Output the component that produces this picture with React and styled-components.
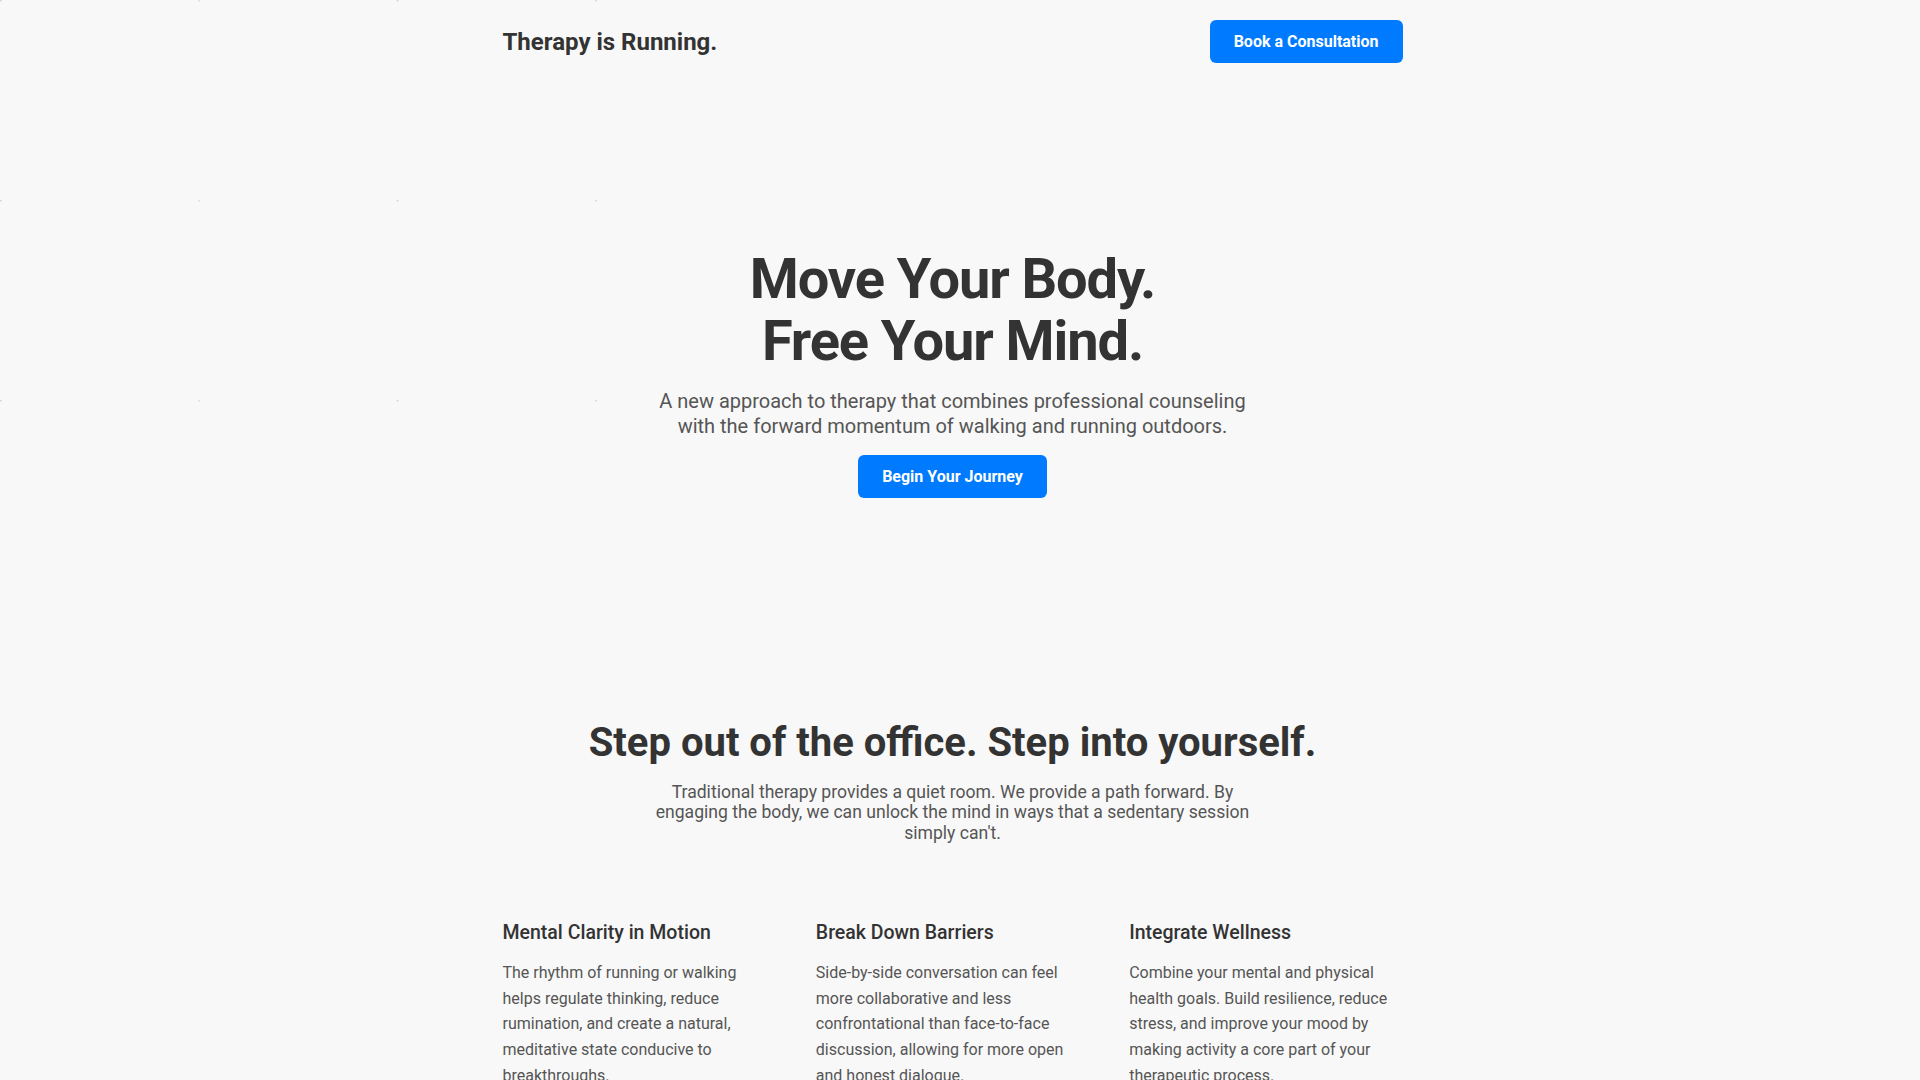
import React from 'react';
import styled, { createGlobalStyle } from 'styled-components';

const GlobalStyle = createGlobalStyle`
    * {
        box-sizing: border-box;
    }

    body {
        margin: 0;
        padding-right: 15px;
        background: #f8f8f8;
        color: #333333;
        font-family: Roboto, "Liberation Sans", Arial, sans-serif;
    }

    body::before {
        content: '';
        position: absolute;
        top: 0;
        left: 0;
        width: 600px;
        height: 402px;
        background-image: radial-gradient(circle at 0 0, #d6d6d6 1.4px, transparent 2px);
        background-size: 198.4px 200px;
        pointer-events: none;
        z-index: 0;
    }
`;

const features = [
    {
        title: 'Mental Clarity in Motion',
        text: 'The rhythm of running or walking helps regulate thinking, reduce rumination, and create a natural, meditative state conducive to breakthroughs.',
    },
    {
        title: 'Break Down Barriers',
        text: 'Side-by-side conversation can feel more collaborative and less confrontational than face-to-face discussion, allowing for more open and honest dialogue.',
    },
    {
        title: 'Integrate Wellness',
        text: 'Combine your mental and physical health goals. Build resilience, reduce stress, and improve your mood by making activity a core part of your therapeutic process.',
    },
];

export default function App() {
    return (
        <>
            <GlobalStyle />
            <Page>
                <Header>
                    <Logo>Therapy is Running.</Logo>
                    <Button>Book a Consultation</Button>
                </Header>

                <Hero>
                    <HeroTitle>
                        Move Your Body.
                        <br />
                        Free Your Mind.
                    </HeroTitle>
                    <HeroText>
                        A new approach to therapy that combines professional counseling
                        with the forward momentum of walking and running outdoors.
                    </HeroText>
                    <Button>Begin Your Journey</Button>
                </Hero>

                <Intro>
                    <SectionTitle>Step out of the office. Step into yourself.</SectionTitle>
                    <SectionText>
                        Traditional therapy provides a quiet room. We provide a path forward.
                        By engaging the body, we can unlock the mind in ways that a sedentary
                        session simply can't.
                    </SectionText>
                </Intro>

                <Features>
                    {
                        features.map((f) => (
                            <Feature key={f.title}>
                                <FeatureTitle>{f.title}</FeatureTitle>
                                <FeatureText>{f.text}</FeatureText>
                            </Feature>
                        ))
                    }
                </Features>
            </Page>
        </>
    );
};

const Page = styled.div`
    position: relative;
    z-index: 1;
    max-width: 900px;
    margin: 0 auto;
    padding-bottom: 120px;
`;

const Header = styled.header`
    display: flex;
    align-items: center;
    justify-content: space-between;
    padding: 20px 0;
`;

const Logo = styled.div`
    font-size: 24px;
    font-weight: 700;
    color: #333333;
`;

const Button = styled.button`
    display: inline-flex;
    align-items: center;
    justify-content: center;
    height: 43px;
    padding: 0 24px;
    border: none;
    border-radius: 6px;
    background: #007bff;
    color: #ffffff;
    font-family: inherit;
    font-size: 16px;
    font-weight: 700;
    cursor: pointer;
`;

const Hero = styled.section`
    display: flex;
    flex-direction: column;
    align-items: center;
    text-align: center;
    padding: 166px 0 110px;
`;

const HeroTitle = styled.h1`
    margin: 0 0 17px;
    font-size: 56px;
    line-height: 1.1;
    font-weight: 700;
    letter-spacing: -1.1px;
    color: #333333;
`;

const HeroText = styled.p`
    max-width: 600px;
    margin: 0 0 16px;
    font-size: 20px;
    line-height: 1.25;
    color: #555555;
`;

const Intro = styled.section`
    display: flex;
    flex-direction: column;
    align-items: center;
    text-align: center;
    padding-top: 111px;
`;

const SectionTitle = styled.h2`
    margin: 0 0 15px;
    font-size: 40px;
    line-height: 1.2;
    font-weight: 700;
    color: #333333;
`;

const SectionText = styled.p`
    max-width: 600px;
    margin: 0;
    font-size: 17.6px;
    line-height: 1.15;
    color: #555555;
`;

const Features = styled.div`
    display: grid;
    grid-template-columns: repeat(3, 1fr);
    gap: 40px;
    margin-top: 78px;
`;

const Feature = styled.div`
    display: flex;
    flex-direction: column;
`;

const FeatureTitle = styled.h3`
    margin: 0 0 15px;
    font-size: 19.5px;
    line-height: 1.25;
    font-weight: 500;
    color: #333333;
`;

const FeatureText = styled.p`
    margin: 0;
    font-size: 16px;
    line-height: 1.6;
    color: #555555;
`;
